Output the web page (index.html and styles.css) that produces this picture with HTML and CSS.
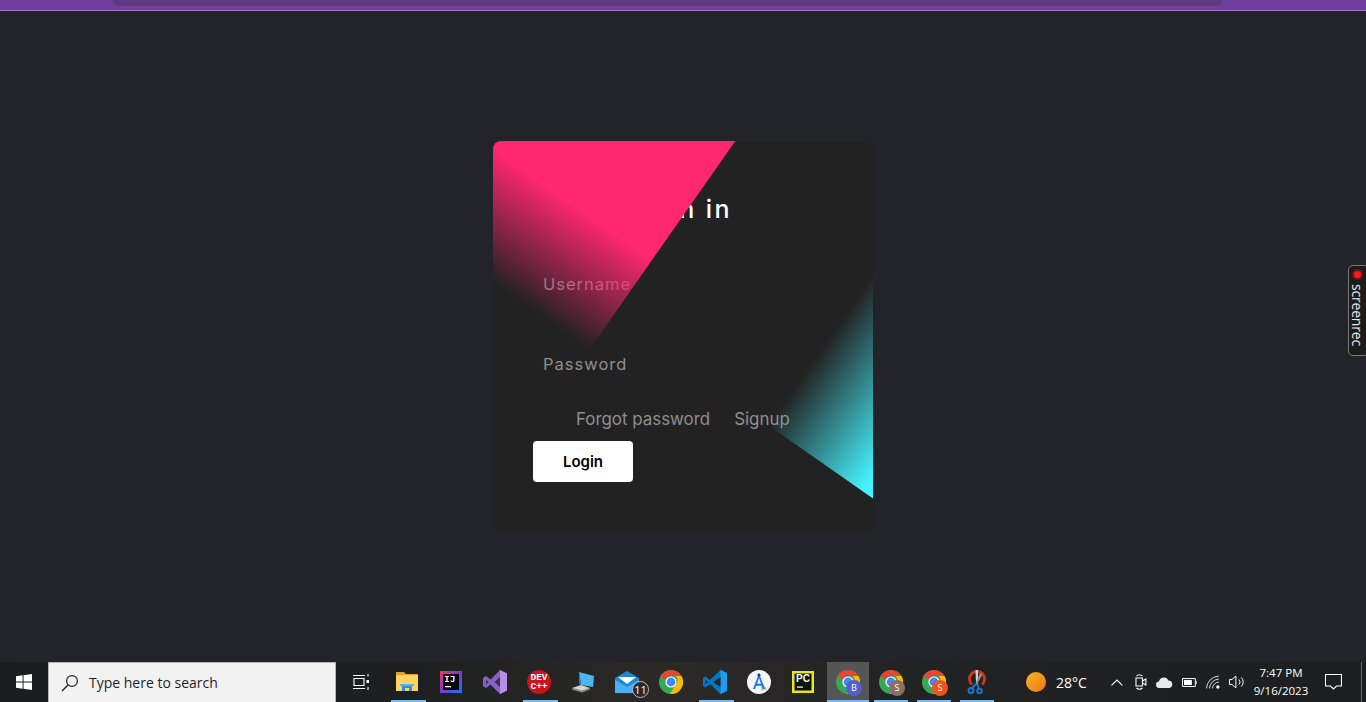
FILE: index.html
```html
<!DOCTYPE html>
<html lang="en">
<head>
  <meta charset="UTF-8">
  <meta name="viewport" content="width=device-width, initial-scale=1.0">
  <title>Sign in</title>
  <link rel="stylesheet" href="styles.css">
</head>
<body>
  <svg class="sprites" width="0" height="0">
    <symbol id="chrome" viewBox="0 0 24 24">
      <circle cx="12" cy="12" r="12" fill="#34a853"/>
      <path d="M12 0a12 12 0 0 1 10.4 6H12a6 6 0 0 0-5.6 3.9L1.6 6A12 12 0 0 1 12 0z" fill="#ea4335"/>
      <path d="M22.4 6A12 12 0 0 1 11 24l5.2-8.6A6 6 0 0 0 16.6 6z" fill="#fbbc05"/>
      <circle cx="12" cy="12" r="5.6" fill="#fff"/>
      <circle cx="12" cy="12" r="4.4" fill="#4285f4"/>
    </symbol>
  </svg>

  <header class="topbar"><div class="topbar-pill"></div></header>

  <main>
    <section class="card">
      <form class="form">
        <h2>Sign in</h2>
        <div class="field">Username</div>
        <div class="field">Password</div>
        <div class="links">
          <a>Forgot password</a>
          <a>Signup</a>
        </div>
        <button type="button">Login</button>
      </form>
      <div class="glow-pink"></div>
      <div class="glow-cyan"></div>
    </section>
  </main>

  <aside class="rec-tab">
    <span class="rec-dot"></span>
    <span class="rec-text">screenrec</span>
  </aside>

  <footer class="taskbar">
    <div class="start">
      <svg width="16" height="16" viewBox="0 0 17 17"><path fill="#fff" d="M0 2.400 7 1.400v6.600H0zM8 1.200 17 0v8H8zM0 9h7v6.600l-7-1zM8 9h9v8l-9-1.200z"/></svg>
    </div>
    <div class="search">
      <svg width="18" height="18" viewBox="0 0 18 18" fill="none" stroke="#222" stroke-width="1.200"><circle cx="11" cy="7" r="5.400"/><path d="M7 11 1 17" stroke-width="1.500"/></svg>
      <span>Type here to search</span>
    </div>
    <div class="taskview">
      <svg width="16" height="16" viewBox="0 0 16 16" fill="none" stroke="#fff" stroke-width="1.100"><path d="M1 4.500h10v7H1zM0 1.500h12M0 14.500h12M15 0v2.500M15 13v3"/><rect x="13.500" y="6" width="2.500" height="3" fill="#fff" stroke="none"/></svg>
    </div>

    <div class="apps">
      <div class="app open">
        <svg width="22" height="20" viewBox="0 0 22 20"><path d="M0 0h8l2 2h12v4H0z" fill="#e0a126"/><path d="M0 3h22v16H0z" fill="#fcd462"/><path d="M6 19v-7h10v7h-3v-3H9v3z" fill="#2f8fdc"/><path d="M4 12h14v2H4z" fill="#58b0ec"/></svg>
      </div>
      <div class="app">
        <svg width="22" height="22" viewBox="0 0 22 22"><defs><linearGradient id="ij" x1="0" y1="0" x2="1" y2="1"><stop offset="0" stop-color="#fe315d"/><stop offset=".5" stop-color="#7b3bc8"/><stop offset="1" stop-color="#087cfa"/></linearGradient></defs><path d="M0 0h22v22H0z" fill="url(#ij)"/><path d="M3 3h16v16H3z" fill="#0a0a0f"/><path d="M5 5h4v1H7.700v4H9v1H5v-1h1.300V6H5zM10.500 5H14.500v4.500c0 1-.8 1.500-2 1.500s-2-.5-2-1.500h1.300c0 .3.300.4.700.4s.7-.1.700-.4V6h-2.700zM5 15h6v1.200H5z" fill="#fff"/></svg>
      </div>
      <div class="app">
        <svg width="24" height="24" viewBox="0 0 24 24"><path d="M17 0l7 3.500v17L17 24 7.500 14.500 3 18l-3-2V8l3-2 4.500 3.500z" fill="#8661c5"/><path d="M17 0l7 3.500v17L17 24z" fill="#b68ee8"/><path d="M17 7l-5.500 5 5.500 5z" fill="#3a2d55"/><path d="M3 9.500v5L5.500 12z" fill="#3a2d55"/></svg>
      </div>
      <div class="app open">
        <svg width="24" height="24" viewBox="0 0 24 24"><circle cx="12" cy="12" r="12" fill="#c8141e"/></svg>
        <span class="dev-label">DEV<br>C++</span>
      </div>
      <div class="app">
        <svg width="24" height="22" viewBox="0 0 24 22"><path d="M8 1l15 4-1 11-12-2z" fill="#4db6f0"/><path d="M8 1l2 13-2-1z" fill="#2a7fbd"/><path d="M1 17l9-3 9 3-8 3z" fill="#d4d4d4"/><path d="M1 17v1.500l10 3 8-3V17l-8 3z" fill="#8a8a8a"/></svg>
      </div>
      <div class="app">
        <svg width="24" height="22" viewBox="0 0 24 22"><path d="M12 0l12 7v15H0V7z" fill="#1c89d6"/><path d="M0 9l12 7 12-7v13H0z" fill="#48b1f0"/><path d="M3 6h18l-9 7z" fill="#fff"/></svg>
        <span class="mail-count">11</span>
      </div>
      <div class="app">
        <svg width="24" height="24"><use href="#chrome"/></svg>
      </div>
      <div class="app open">
        <svg width="24" height="24" viewBox="0 0 24 24"><path d="M17.500 0 24 3v18l-6.500 3L7 14l-4.500 3.500L0 16V8l2.500-1.500L7 10z" fill="#0078c8"/><path d="M17.500 0 24 3v18l-6.500 3z" fill="#1f9cf0"/><path d="M17.500 7 10 12l7.500 5z" fill="#26282c"/><path d="M2.500 9.500v5L5 12z" fill="#26282c"/></svg>
      </div>
      <div class="app">
        <svg width="24" height="24" viewBox="0 0 24 24"><circle cx="12" cy="12" r="12" fill="#f5f5f5"/><path d="M14 12l6 7-6 2z" fill="#a8d8a0"/><path d="M12 3.500 6 19h2l1.200-3.300h5.600L16 19h2zM10 13.800 12 8l2 5.800z" fill="#1a73e8"/><circle cx="12" cy="5" r="1.600" fill="#0d3f8f"/></svg>
      </div>
      <div class="app">
        <svg width="22" height="22" viewBox="0 0 22 22"><path d="M0 0h22v22H0z" fill="#e9e41e"/><path d="M2.500 2.500h17v17h-17z" fill="#06140c"/><path d="M5 15.500h6v1.200H5z" fill="#fff"/></svg>
        <span class="pc-label">PC</span>
      </div>
      <div class="app active open">
        <svg width="24" height="24"><use href="#chrome"/></svg>
        <span class="avatar avatar-b">B</span>
      </div>
      <div class="app narrow open">
        <svg width="24" height="24"><use href="#chrome"/></svg>
        <span class="avatar avatar-s">S</span>
      </div>
      <div class="app narrow open">
        <svg width="24" height="24"><use href="#chrome"/></svg>
        <span class="avatar avatar-o">S</span>
      </div>
      <div class="app narrow open">
        <svg width="20" height="24" viewBox="0 0 20 24"><path d="M5 14.500A7.500 7.500 0 1 1 15 14.500" fill="none" stroke="#c8391c" stroke-width="3"/><path d="M8.500 0h2.500v14l-2 .5z" fill="#d0d0d0"/><path d="M13 3l2.500 1.500L10 14.500l-1.500-1z" fill="#8b8b8b"/><path d="M9 14 5 18M10 14l2 4" stroke="#1678d0" stroke-width="2"/><circle cx="4" cy="20.500" r="2.500" fill="none" stroke="#1678d0" stroke-width="2"/><circle cx="12.500" cy="21" r="2.300" fill="none" stroke="#1678d0" stroke-width="2"/></svg>
      </div>
    </div>

    <div class="weather">
      <span class="sun"></span>
      <span>28°C</span>
    </div>

    <div class="tray">
      <svg class="tray-chevron" width="12" height="7" viewBox="0 0 12 7" fill="none" stroke="#fff" stroke-width="1.100"><path d="M.5 6.500 6 1l5.500 5.500"/></svg>
      <svg width="12" height="18" viewBox="0 0 12 18" fill="none" stroke="#fff" stroke-width="1.100"><path d="M1 5h6.500v8H1zM7.500 8l3.500-2v6l-3.500-2zM1.500 3a4 4 0 0 1 6 0M1.500 15a4 4 0 0 0 6 0"/></svg>
      <svg width="17" height="11" viewBox="0 0 17 11"><path d="M3.500 11A3.200 3.200 0 0 1 3 4.600 5 5 0 0 1 12.500 3.500 3.800 3.800 0 0 1 13.500 11z" fill="#e8e8e8"/></svg>
      <svg width="16" height="9" viewBox="0 0 16 9"><path d="M.5.500h13v8H.5z" fill="none" stroke="#fff"/><path d="M2 2h8v5H2z" fill="#fff"/><path d="M14.500 3H16v3h-1.500z" fill="#fff"/></svg>
      <svg width="14" height="14" viewBox="0 0 14 14" fill="none" stroke="#ddd"><path d="M.5 13.500A13 13 0 0 1 13 1M3.500 13.500A10 10 0 0 1 13 4M6.500 13.500A7 7 0 0 1 13 7"/><circle cx="12" cy="12" r="1.700" fill="#fff" stroke="none"/></svg>
      <svg width="16" height="14" viewBox="0 0 16 14" fill="none" stroke="#fff"><path d="M.5 4.500h2.500L7 1v12L3 9.500H.5zM10 4.500a3.500 3.500 0 0 1 0 5M12.500 2.500a7 7 0 0 1 0 9"/></svg>
    </div>

    <div class="clock">
      <span>7:47 PM</span>
      <span>9/16/2023</span>
    </div>

    <div class="notify">
      <svg width="17" height="16" viewBox="0 0 17 16" fill="none" stroke="#fff" stroke-width="1.100"><path d="M.5.500h16v11.500h-5l-3 3-3-3h-5z"/></svg>
    </div>
    <div class="show-desktop"></div>
  </footer>
</body>
</html>
```

FILE: styles.css
```css
* {
  margin: 0;
  padding: 0;
  border: 0;
  box-sizing: border-box;
}

html,
body {
  height: 100%;
  overflow: hidden;
}

body {
  display: flex;
  flex-direction: column;
  background-color: #23242a;
  font-family: "Inter", "Liberation Sans", sans-serif;
}

.sprites {
  position: absolute;
}

.topbar {
  height: 11px;
  flex-shrink: 0;
  padding: 0 144px 0 113px;
  background-color: #6f3f9f;
  border-bottom: 1px solid #a278c4;
}

.topbar-pill {
  height: 6px;
  background-color: #5c3a7e;
  border-radius: 0 0 12px 12px;
}

main {
  display: flex;
  flex: 1;
  justify-content: center;
  align-items: center;
}

.card {
  position: relative;
  width: 380px;
  height: 391px;
  background-color: #222222;
  border-radius: 8px;
  overflow: hidden;
}

.form {
  display: flex;
  flex-direction: column;
  align-items: flex-start;
  padding: 50px 40px;
}

h2 {
  align-self: center;
  height: 36px;
  color: #ffffff;
  font-size: 25px;
  font-weight: 500;
  line-height: 36px;
  letter-spacing: 2.400px;
}

.field {
  height: 45px;
  margin-top: 35px;
  padding-left: 10px;
  color: #8f8f8f;
  font-size: 16.500px;
  line-height: 44px;
  letter-spacing: 1px;
}

.links {
  display: flex;
  gap: 24px;
  margin-top: 20px;
  padding-left: 43px;
  color: #8f8f8f;
  font-size: 16.900px;
  line-height: 24px;
}

button {
  width: 100px;
  height: 41px;
  margin-top: 10px;
  background-color: #ffffff;
  color: #000000;
  font-family: inherit;
  font-size: 15px;
  font-weight: 600;
  border-radius: 4px;
}

.glow-pink {
  position: absolute;
  left: -284px;
  top: -211px;
  width: 380px;
  height: 420px;
  background: linear-gradient(0deg, transparent, #ff2770 110px);
  transform: rotate(35deg);
  transform-origin: bottom right;
}

.glow-cyan {
  position: absolute;
  left: 275px;
  top: -136px;
  width: 380px;
  height: 420px;
  background: linear-gradient(90deg, transparent, #45f3ff 115px);
  transform: rotate(35deg);
  transform-origin: bottom left;
}

.rec-tab {
  position: absolute;
  top: 265px;
  right: -3px;
  display: flex;
  flex-direction: column;
  align-items: center;
  gap: 4px;
  width: 21px;
  height: 91px;
  padding-top: 3px;
  padding-right: 3px;
  background-color: #1c1c1c;
  border: 1px solid #7a7a7a;
  border-radius: 5px;
}

.rec-dot {
  width: 11px;
  height: 11px;
  background-color: #ff1a1a;
  border: 2px solid #6b1818;
  border-radius: 50%;
}

.rec-text {
  color: #e8e8e8;
  font-family: "Open Sans", sans-serif;
  font-size: 14px;
  font-weight: 500;
  line-height: 14px;
  letter-spacing: -.2px;
  writing-mode: vertical-rl;
}

.taskbar {
  display: flex;
  align-items: center;
  height: 40px;
  flex-shrink: 0;
  background: linear-gradient(90deg, #1b1d1f 0%, #1e1f20 30%, #2b2a27 50%, #242424 62%, #1e2022 80%, #1c1e20 100%);
  color: #ffffff;
  font-family: "Open Sans", sans-serif;
}

.taskbar > * {
  flex-shrink: 0;
}

.start {
  display: flex;
  width: 48px;
  height: 40px;
  justify-content: center;
  align-items: center;
}

.search {
  display: flex;
  align-items: center;
  gap: 10px;
  width: 288px;
  height: 40px;
  padding-left: 12px;
  background-color: #f2f2f2;
  border: 1px solid #b5b5b5;
  border-bottom: 0;
  color: #1f1f1f;
  font-size: 14px;
}

.taskview {
  display: flex;
  width: 49px;
  height: 40px;
  justify-content: center;
  align-items: center;
}

.apps {
  display: flex;
  width: 613px;
}

.app {
  position: relative;
  display: flex;
  width: 44px;
  height: 40px;
  flex-shrink: 0;
  justify-content: center;
  align-items: center;
}

.app.narrow {
  width: 43px;
}

.app.open::after {
  content: "";
  position: absolute;
  left: 6px;
  right: 3px;
  bottom: 0;
  height: 2px;
  background-color: #76b9ed;
}

.app.narrow::after {
  left: 5px;
  right: 4px;
}

.app.active {
  width: 42px;
  margin-left: 2px;
  background-color: #555555;
}

.app.active::after {
  left: 0;
  right: 0;
}

.dev-label {
  position: absolute;
  width: 100%;
  color: #ffffff;
  font-family: "Liberation Mono", monospace;
  font-size: 9.500px;
  font-weight: 700;
  line-height: 9px;
  text-align: center;
}

.pc-label {
  position: absolute;
  top: 11px;
  left: 15px;
  color: #ffffff;
  font-family: "Liberation Sans", sans-serif;
  font-size: 10px;
  font-weight: 700;
}

.mail-count {
  position: absolute;
  right: 0;
  bottom: 4px;
  width: 17px;
  height: 17px;
  background-color: #2a2a2a;
  border: 1px solid #bdbdbd;
  border-radius: 50%;
  font-size: 11px;
  line-height: 15px;
  text-align: center;
}

.avatar {
  position: absolute;
  right: 7px;
  bottom: 6px;
  width: 16px;
  height: 16px;
  border-radius: 50%;
  font-size: 9px;
  line-height: 16px;
  text-align: center;
}

.avatar-b {
  background-color: #5060c8;
}

.avatar-s {
  background-color: #8d6e63;
}

.avatar-o {
  background-color: #f4511e;
}

.weather {
  display: flex;
  align-items: center;
  gap: 10px;
  width: 85px;
  margin-left: 28px;
  font-size: 14px;
}

.sun {
  width: 20px;
  height: 20px;
  background: linear-gradient(135deg, #f6b42a, #f0780f);
  border-radius: 50%;
}

.tray {
  display: flex;
  align-items: center;
  gap: 9px;
  width: 134px;
}

.tray-chevron {
  margin-right: 3px;
}

.clock {
  display: flex;
  flex-direction: column;
  align-items: center;
  width: 72px;
  font-size: 11.500px;
  line-height: 18px;
}

.notify {
  display: flex;
  width: 32px;
  justify-content: center;
}

.show-desktop {
  width: 1px;
  height: 40px;
  margin-left: 12px;
  background-color: #6a6a6a;
}
```
